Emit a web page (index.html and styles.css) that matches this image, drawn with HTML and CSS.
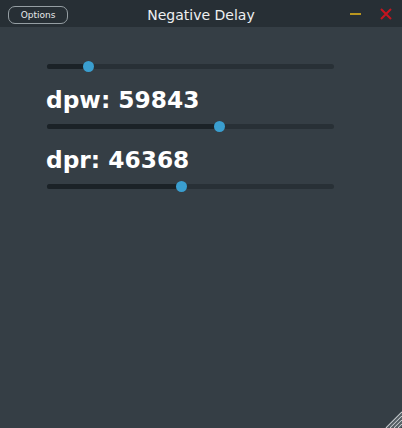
FILE: index.html
```html
<!DOCTYPE html>
<html>
<head>
<meta charset="utf-8">
<link rel="stylesheet" href="styles.css">
</head>
<body>
<div class="window">
  <div class="titlebar">
    <div class="tb-left"><button class="options">Options</button></div>
    <div class="title">Negative Delay</div>
    <div class="tb-right">
      <span class="minimize"></span>
      <svg class="close" width="12" height="12" viewBox="0 0 12 12"><path d="M1 1L11 11M11 1L1 11" stroke="#c4141f" stroke-width="2"/></svg>
    </div>
  </div>
  <div class="content">
    <div class="slider"><div class="track"><div class="fill" style="width:41px"></div><div class="thumb" style="left:41px"></div></div></div>
    <div class="label">dpw: 59843</div>
    <div class="slider"><div class="track"><div class="fill" style="width:172px"></div><div class="thumb" style="left:172px"></div></div></div>
    <div class="label">dpr: 46368</div>
    <div class="slider"><div class="track"><div class="fill" style="width:134px"></div><div class="thumb" style="left:134px"></div></div></div>
  </div>
  <svg class="grip" width="18" height="18" viewBox="0 0 18 18">
    <g stroke-width="1.2">
      <path d="M18 2L2 18" stroke="#c8cccf"/>
      <path d="M18 6L6 18" stroke="#c8cccf"/>
      <path d="M18 10L10 18" stroke="#c8cccf"/>
      <path d="M18 14L14 18" stroke="#c8cccf"/>
      <path d="M18 3.5L3.5 18" stroke="#5c666c"/>
      <path d="M18 7.5L7.5 18" stroke="#5c666c"/>
      <path d="M18 11.5L11.5 18" stroke="#5c666c"/>
      <path d="M18 15.5L15.5 18" stroke="#5c666c"/>
    </g>
  </svg>
</div>
</body>
</html>
```

FILE: styles.css
```css
html, body {
  margin: 0;
  padding: 0;
}
body {
  width: 402px;
  height: 428px;
  overflow: hidden;
  font-family: "DejaVu Sans", sans-serif;
}
.window {
  position: relative;
  width: 402px;
  height: 428px;
  background: #353e45;
  display: flex;
  flex-direction: column;
}
.titlebar {
  height: 27px;
  background: #272f35;
  display: grid;
  grid-template-columns: 1fr auto 1fr;
  align-items: center;
}
.tb-left {
  display: flex;
  padding-left: 8px;
}
.options {
  width: 60px;
  height: 18px;
  margin-top: 2px;
  border: 1px solid #959ea3;
  border-radius: 7px;
  background: transparent;
  color: #e6e9eb;
  font-family: "DejaVu Sans", sans-serif;
  font-size: 9px;
  padding: 0;
  line-height: 16px;
}
.title {
  color: #eef0f1;
  font-size: 14px;
  padding-top: 3px;
}
.tb-right {
  display: flex;
  justify-content: flex-end;
  align-items: center;
  padding-right: 10px;
  gap: 19px;
}
.minimize {
  display: block;
  width: 11px;
  height: 2px;
  background: #b9961f;
  margin-top: 1px;
}
.close {
  display: block;
  margin-top: 1px;
}
.content {
  padding: 34px 0 0 47px;
  display: flex;
  flex-direction: column;
}
.slider {
  width: 287px;
  height: 11px;
  display: flex;
  align-items: center;
}
.track {
  position: relative;
  width: 100%;
  height: 5px;
  border-radius: 3px;
  background: #283036;
}
.fill {
  height: 100%;
  border-radius: 3px;
  background: #1b2227;
}
.thumb {
  position: absolute;
  top: -3px;
  width: 11px;
  height: 11px;
  margin-left: -5.5px;
  border-radius: 50%;
  background: #3a9ecf;
}
.label {
  color: #ffffff;
  font-weight: bold;
  font-size: 23.3px;
  line-height: 27px;
  margin: 14px 0 8px -1px;
}
.grip {
  position: absolute;
  right: 0;
  bottom: 0;
}
```
